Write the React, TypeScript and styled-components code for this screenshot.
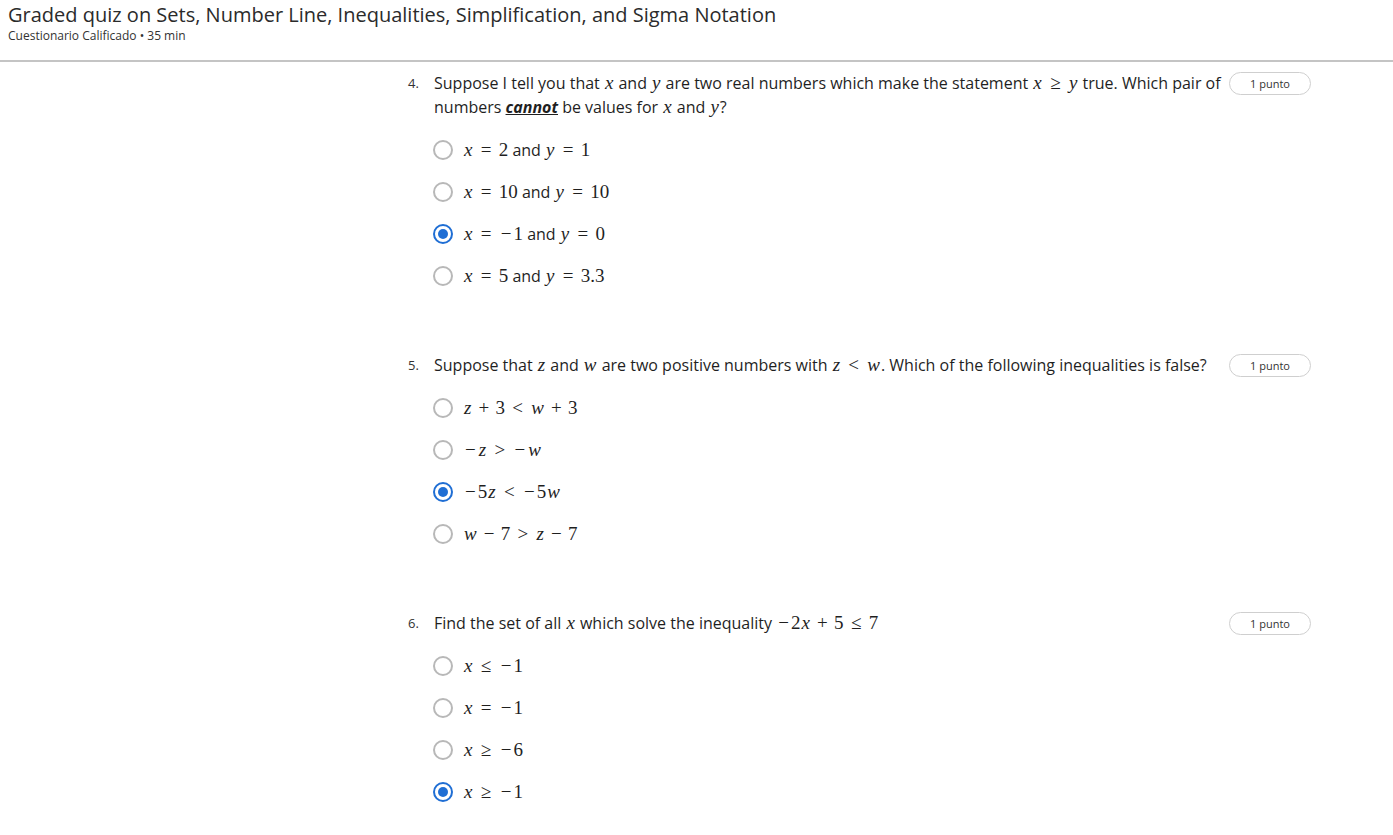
import React from "react";
import styled, { createGlobalStyle } from "styled-components";

const Global = createGlobalStyle`
  html, body { margin: 0; padding: 0; background: #fff; }
  body { font-family: "Open Sans", "Noto Sans", sans-serif; color: #1f1f1f; }
`;

const Header = styled.header`
  padding: 2px 8px 0;
  height: 58px;
  border-bottom: 2px solid #c4c4c4;
  box-sizing: content-box;
`;

const Title = styled.h1`
  margin: 0;
  font-size: 20px;
  line-height: 26px;
  font-weight: 400;
  color: #2b2b2b;
`;

const Subtitle = styled.div`
  font-size: 12px;
  line-height: 16px;
  color: #333;
`;

const Main = styled.main`
  width: 903px;
  margin-left: 408px;
  padding-top: 9px;
  display: flex;
  flex-direction: column;
  gap: 56px;
`;

const Question = styled.section`
  display: flex;
  flex-direction: column;
  gap: 10px;
`;

const Prompt = styled.div`
  display: grid;
  grid-template-columns: 26px 1fr auto;
  column-gap: 0;
  align-items: start;
  font-size: 16px;
  line-height: 24px;
`;

const Num = styled.span`
  font-size: 13px;
  line-height: 24px;
  color: #333;
`;

const Text = styled.div`
  color: #1f1f1f;
  padding-right: 8px;
`;

const Strong = styled.strong`
  font-style: italic;
  text-decoration: underline;
  font-weight: 700;
`;

const Badge = styled.span`
  display: inline-flex;
  align-items: center;
  justify-content: center;
  width: 80px;
  height: 21px;
  margin-top: 1px;
  border: 1px solid #cfcfcf;
  border-radius: 12px;
  font-size: 11px;
  color: #333;
`;

const Options = styled.ul`
  list-style: none;
  margin: 0;
  padding: 0 0 0 25px;
`;

const Option = styled.li`
  display: flex;
  align-items: center;
  height: 42px;
  gap: 10px;
  font-size: 16px;
`;

const Radio = styled.span<{ $checked?: boolean }>`
  box-sizing: border-box;
  width: 20px;
  height: 20px;
  border-radius: 50%;
  border: 2px solid ${(p) => (p.$checked ? "#1f6ed4" : "#b8b8b8")};
  display: flex;
  align-items: center;
  justify-content: center;
  flex-shrink: 0;
  &::after {
    content: "";
    display: ${(p) => (p.$checked ? "block" : "none")};
    width: 10px;
    height: 10px;
    border-radius: 50%;
    background: #1f6ed4;
  }
`;

const MathWrap = styled.span`
  font-family: "Liberation Serif", "Times New Roman", serif;
  font-size: 19px;
  white-space: nowrap;
  color: #1f1f1f;
`;

const MOrd = styled.span<{ $italic?: boolean }>`
  font-style: ${(p) => (p.$italic ? "italic" : "normal")};
  ${(p) => (p.$italic ? "padding: 0 0.05em;" : "")}
`;

const MOp = styled.span<{ $space: number }>`
  display: inline-block;
  width: 0.778em;
  text-align: center;
  margin: 0 ${(p) => p.$space}em;
`;

type Tok = { t: string; kind: "var" | "num" | "rel" | "bin" | "ord" };

function tokenize(s: string): Tok[] {
  const out: Tok[] = [];
  for (const ch of s) {
    if (ch === " ") continue;
    const prev = out[out.length - 1];
    if (/[a-z]/i.test(ch)) out.push({ t: ch, kind: "var" });
    else if (/[0-9.]/.test(ch)) {
      if (prev && prev.kind === "num") prev.t += ch;
      else out.push({ t: ch, kind: "num" });
    } else if ("=<>≤≥".includes(ch)) out.push({ t: ch, kind: "rel" });
    else if (ch === "+" || ch === "−") {
      if (prev && (prev.kind === "var" || prev.kind === "num"))
        out.push({ t: ch, kind: "bin" });
      else out.push({ t: ch, kind: "ord" });
    } else out.push({ t: ch, kind: "ord" });
  }
  return out;
}

const M: React.FC<{ e: string }> = ({ e }) => (
  <MathWrap>
    {tokenize(e).map((k, i) =>
      k.kind === "rel" ? (
        <MOp key={i} $space={0.28}>{k.t}</MOp>
      ) : k.kind === "bin" ? (
        <MOp key={i} $space={0.22}>{k.t}</MOp>
      ) : k.kind === "ord" && (k.t === "−" || k.t === "+") ? (
        <MOp key={i} $space={0}>{k.t}</MOp>
      ) : (
        <MOrd key={i} $italic={k.kind === "var"}>{k.t}</MOrd>
      )
    )}
  </MathWrap>
);

type Q = {
  n: number;
  prompt: React.ReactNode;
  options: React.ReactNode[];
  checked: number;
};

const questions: Q[] = [
  {
    n: 4,
    prompt: (
      <>
        Suppose I tell you that <M e="x" /> and <M e="y" /> are two real numbers which make the
        statement <M e="x ≥ y" /> true. Which pair of numbers <Strong>cannot</Strong> be values for{" "}
        <M e="x" /> and <M e="y" />?
      </>
    ),
    options: [
      <><M e="x = 2" /> and <M e="y = 1" /></>,
      <><M e="x = 10" /> and <M e="y = 10" /></>,
      <><M e="x = −1" /> and <M e="y = 0" /></>,
      <><M e="x = 5" /> and <M e="y = 3.3" /></>,
    ],
    checked: 2,
  },
  {
    n: 5,
    prompt: (
      <>
        Suppose that <M e="z" /> and <M e="w" /> are two positive numbers with <M e="z < w" />.
        Which of the following inequalities is false?
      </>
    ),
    options: [
      <M e="z + 3 < w + 3" />,
      <M e="−z > −w" />,
      <M e="−5z < −5w" />,
      <M e="w − 7 > z − 7" />,
    ],
    checked: 2,
  },
  {
    n: 6,
    prompt: (
      <>
        Find the set of all <M e="x" /> which solve the inequality <M e="−2x + 5 ≤ 7" />
      </>
    ),
    options: [<M e="x ≤ −1" />, <M e="x = −1" />, <M e="x ≥ −6" />, <M e="x ≥ −1" />],
    checked: 3,
  },
];

export default function App() {
  return (
    <>
      <Global />
      <Header>
        <Title>Graded quiz on Sets, Number Line, Inequalities, Simplification, and Sigma Notation</Title>
        <Subtitle>Cuestionario Calificado • 35 min</Subtitle>
      </Header>
      <Main>
        {questions.map((q) => (
          <Question key={q.n}>
            <Prompt>
              <Num>{q.n}.</Num>
              <Text>{q.prompt}</Text>
              <Badge>1 punto</Badge>
            </Prompt>
            <Options>
              {q.options.map((o, i) => (
                <Option key={i}>
                  <Radio $checked={i === q.checked} />
                  <span>{o}</span>
                </Option>
              ))}
            </Options>
          </Question>
        ))}
      </Main>
    </>
  );
}
